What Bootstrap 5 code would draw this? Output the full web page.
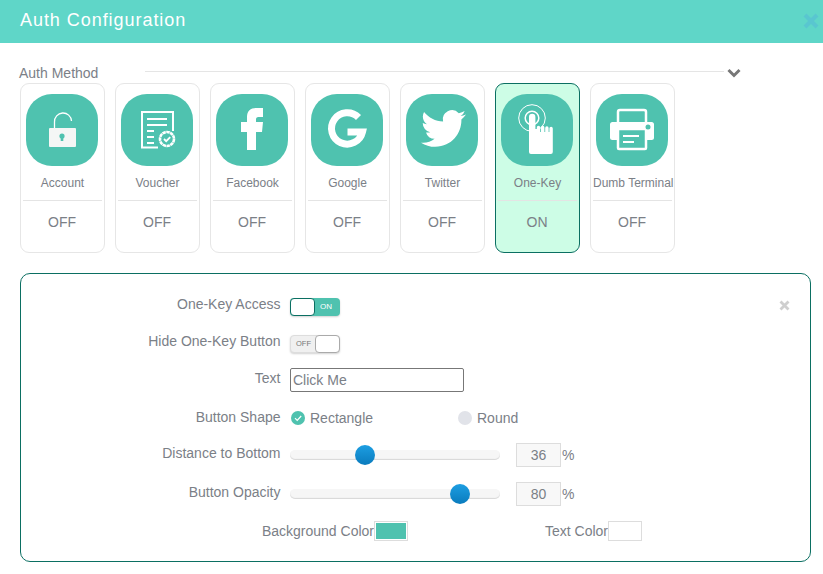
<!DOCTYPE html>
<html lang="en">
<head>
<meta charset="utf-8">
<title>Auth Configuration</title>
<link href="https://cdn.jsdelivr.net/npm/bootstrap@5.3.0/dist/css/bootstrap.min.css" rel="stylesheet">
<style>
body{font-family:"Liberation Sans",Arial,sans-serif;color:#7b8087;background:#fff;font-size:14px;overflow:hidden}
.hd-bar{height:43px;background:#5fd6c8;padding:0 4px 2px 20px}
.hd-title{font-size:18px;letter-spacing:.95px;color:#fff;font-weight:400}
.method-head{height:40px;padding:20px 82px 0 19px}
.method-line{height:1px;background:#e5e5e5;margin-left:47px;margin-right:3px;margin-top:-3px}
.tile-row{padding-left:20px;gap:10px}
.tile{width:85px;height:170px;border:1px solid #e6e6e6;border-radius:9px;background:#fff;padding:10px 1px 0}
.tile-on{background:#cdfde6;border-color:#0b6f62}
.tile-ic{width:72px;height:72px;border-radius:26px;background:#4fc2af;margin-left:4px;display:block}
.tile-name{font-size:12px;height:35px;line-height:34px;white-space:nowrap;border-bottom:1px solid #e4e4e4;margin:0 1px;text-align:center}
.tile-state{font-size:14px;line-height:43px;text-align:center;padding-right:1px}
.cfg{margin:20px 12px 0 20px;height:289px;border:1px solid #0b6f62;border-radius:10px;padding:12px 20px 0 0}
.cfg-row{height:38px}
.cfg-row:nth-child(3){height:36px}
.cfg-row:nth-child(4){height:40px}
.cfg-row:nth-child(5){height:34px}
.cfg-row:nth-child(6){height:44px}
.cfg-row:nth-child(7){height:30px}
.cfg-lbl{width:259.500px;text-align:right;margin-right:9.500px;margin-top:-3px;flex:none}
.cfg-row:nth-child(1) .cfg-lbl,.cfg-row:nth-child(4) .cfg-lbl{margin-top:-1px}
.tog{width:50px;height:18px;border-radius:4px;font-size:8px;line-height:18px;box-shadow:0 1px 2px rgba(0,0,0,.18)}
.tog-on{background:#4fc2af;color:#fff;padding-left:30px;margin-top:4px}
.tog-off{background:#f0f0f0;color:#777;padding-left:5px;border:1px solid #ddd;line-height:16px;margin-top:2px;font-size:7.500px}
.tog-knob{position:absolute;top:0;width:25px;height:18px;background:#fff;border:1px solid #0b6f62;border-radius:4px}
.tog-off .tog-knob{top:-1px;right:-1px;border-color:#aaa}
.tog-on .tog-knob{left:0}
.txt-in{width:174px;height:24px;border:1px solid #777;border-radius:2px;padding:0 2px;font-size:14px;color:#7b8087;font-family:inherit;background:#fff}
.rad{width:14px;height:14px;border-radius:50%;flex:none;margin-left:1px;margin-right:5px}
.rad-on{background:#4fc2af}
.rad-off{background:#e1e3e9}
.rad-wrap{width:167px}
.track{width:210px;height:10px;border-radius:5px;background:#f6f6f6;box-shadow:inset 0 -1px 1px #d8d8d8}
.thumb{position:absolute;top:-5px;width:20px;height:20px;border-radius:50%;background:linear-gradient(#1d9ee2,#0a7bbd);transform:translateX(-10px)}
.num{width:45px;height:24px;line-height:22px;margin-left:16px;margin-right:1px;text-align:center;border:1px solid #ddd;background:#f8f8f8;font-size:14px}
.pct{font-size:14px}
.swatch{width:34px;height:20px;border:1px solid #ddd;padding:1px;background:#fff;flex:none}
.swatch i{display:block;height:100%;background:#4fc2af}
.swatch.white i{background:#fff}
.lbl-bg{width:353px;text-align:right;flex:none}
.lbl-tx{width:200px;text-align:right;flex:none}
</style>
</head>
<body>
<div class="hd-bar d-flex align-items-center justify-content-between">
  <div class="hd-title">Auth Configuration</div>
  <svg width="16" height="16" viewBox="0 0 16 16"><path d="M2 2l12 12M14 2L2 14" stroke="#59c6d0" stroke-width="4"/></svg>
</div>

<div class="method-head d-flex align-items-center">
  <span class="text-nowrap">Auth Method</span>
  <div class="method-line flex-grow-1"></div>
  <svg width="14" height="10" viewBox="0 0 14 10" class="flex-shrink-0"><path d="M1.500 2L7 7.500 12.500 2" fill="none" stroke="#777" stroke-width="3"/></svg>
</div>

<div class="tile-row d-flex">
  <div class="tile">
    <svg class="tile-ic" viewBox="0 0 72 72"><path d="M28.500 34V28a8.500 8.500 0 0 1 17-1" fill="none" stroke="#fff" stroke-width="1.300"/><rect x="23" y="34" width="27" height="19" rx="1" fill="#f4f6f5"/><circle cx="36" cy="42" r="2.600" fill="#4fc2af"/><rect x="34.700" y="42" width="2.600" height="5" fill="#4fc2af"/></svg>
    <div class="tile-name">Account</div><div class="tile-state">OFF</div>
  </div>
  <div class="tile">
    <svg class="tile-ic" viewBox="0 0 72 72"><path d="M37 53.500H21V18h31v19" fill="none" stroke="#fff" stroke-width="2"/><path d="M26 25h20M26 31h20M26 37h7M26 43h7M26 49h7" stroke="#fff" stroke-width="2.200"/><circle cx="46" cy="45" r="7" fill="none" stroke="#fff" stroke-width="2.600" stroke-dasharray="3.500 .5"/><path d="M43 45l2.200 2.200 4-4" fill="none" stroke="#fff" stroke-width="1.800"/></svg>
    <div class="tile-name">Voucher</div><div class="tile-state">OFF</div>
  </div>
  <div class="tile">
    <svg class="tile-ic" viewBox="0 0 72 72"><path d="M31 56V38h-6V28h6v-5c0-6 3.500-9 9-9h7v9h-4.500c-2 0-2.500 1-2.500 2.500V28h7l-1 10h-6v18z" fill="#fff"/></svg>
    <div class="tile-name">Facebook</div><div class="tile-state">OFF</div>
  </div>
  <div class="tile">
    <svg class="tile-ic" viewBox="0 0 72 72"><path d="M47.500 23.500A15.700 15.700 0 1 0 51.500 38H36.500" fill="none" stroke="#fff" stroke-width="7"/></svg>
    <div class="tile-name">Google</div><div class="tile-state">OFF</div>
  </div>
  <div class="tile">
    <svg class="tile-ic" viewBox="0 0 72 72"><path transform="translate(15 12) scale(1.875)" fill="#fff" d="M23.953 4.570a10 10 0 0 1-2.825.775 4.958 4.958 0 0 0 2.163-2.723c-.951.555-2.005.959-3.127 1.184a4.920 4.920 0 0 0-8.384 4.482C7.690 8.095 4.067 6.130 1.640 3.162a4.822 4.822 0 0 0-.666 2.475c0 1.710.870 3.213 2.188 4.096a4.904 4.904 0 0 1-2.228-.616v.060a4.923 4.923 0 0 0 3.946 4.827 4.996 4.996 0 0 1-2.212.085 4.936 4.936 0 0 0 4.604 3.417 9.867 9.867 0 0 1-6.102 2.105c-.390 0-.779-.023-1.170-.067a13.995 13.995 0 0 0 7.557 2.209c9.053 0 13.998-7.496 13.985-13.985 0-.210 0-.420-.015-.630A9.935 9.935 0 0 0 24 4.590z"/></svg>
    <div class="tile-name">Twitter</div><div class="tile-state">OFF</div>
  </div>
  <div class="tile tile-on">
    <svg class="tile-ic" viewBox="0 0 72 72"><circle cx="31" cy="24" r="13.300" fill="none" stroke="#fff" stroke-width="1"/><circle cx="31" cy="24" r="6.800" fill="none" stroke="#fff" stroke-width="1.500"/><path d="M28 23a3.200 3.200 0 0 1 6.400 0v12h1.400v-1.500a1.700 1.700 0 0 1 3.400 0V38h.8v-4.500a1.700 1.700 0 0 1 3.400 0V38h.8v-4a1.700 1.700 0 0 1 3.400 0V38h.8v-3.500a1.700 1.700 0 0 1 3.400 0V58a2 2 0 0 1-2 2H30a2 2 0 0 1-2-2z" fill="#fff"/></svg>
    <div class="tile-name">One-Key</div><div class="tile-state">ON</div>
  </div>
  <div class="tile">
    <svg class="tile-ic" viewBox="0 0 72 72"><rect x="22" y="16" width="28" height="16" rx="2" fill="none" stroke="#fff" stroke-width="2.500"/><rect x="14" y="28" width="44" height="18" rx="2.500" fill="#fff"/><rect x="22" y="35" width="28" height="20" rx="1" fill="#4fc2af" stroke="#fff" stroke-width="2.500"/><path d="M27 42h16M27 48h11" stroke="#fff" stroke-width="2"/><circle cx="52" cy="33" r="2.500" fill="#4fc2af"/></svg>
    <div class="tile-name">Dumb Terminal</div><div class="tile-state">OFF</div>
  </div>
</div>

<div class="cfg">
  <div class="cfg-row d-flex align-items-center">
    <div class="cfg-lbl">One-Key Access</div>
    <div class="tog tog-on position-relative">ON<span class="tog-knob"></span></div>
    <svg class="ms-auto" width="11" height="11" viewBox="0 0 11 11"><path d="M1.500 1.500l8 8M9.500 1.500l-8 8" stroke="#cfcfcf" stroke-width="2.800"/></svg>
  </div>
  <div class="cfg-row d-flex align-items-center">
    <div class="cfg-lbl">Hide One-Key Button</div>
    <div class="tog tog-off position-relative">OFF<span class="tog-knob"></span></div>
  </div>
  <div class="cfg-row d-flex align-items-center">
    <div class="cfg-lbl">Text</div>
    <input class="txt-in" type="text" value="Click Me">
  </div>
  <div class="cfg-row d-flex align-items-center">
    <div class="cfg-lbl">Button Shape</div>
    <div class="rad-wrap d-flex align-items-center">
      <svg class="rad rad-on" viewBox="0 0 14 14"><path d="M4 7.200l2.200 2.200L10.200 5" fill="none" stroke="#fff" stroke-width="1.200"/></svg><span>Rectangle</span>
    </div>
    <div class="d-flex align-items-center"><span class="rad rad-off"></span><span>Round</span></div>
  </div>
  <div class="cfg-row d-flex align-items-center">
    <div class="cfg-lbl">Distance to Bottom</div>
    <div class="track position-relative"><span class="thumb" style="left:75px"></span></div>
    <div class="num">36</div><span class="pct">%</span>
  </div>
  <div class="cfg-row d-flex align-items-center">
    <div class="cfg-lbl">Button Opacity</div>
    <div class="track position-relative"><span class="thumb" style="left:170px"></span></div>
    <div class="num">80</div><span class="pct">%</span>
  </div>
  <div class="cfg-row d-flex align-items-center">
    <div class="lbl-bg">Background Color</div>
    <div class="swatch"><i></i></div>
    <div class="lbl-tx">Text Color</div>
    <div class="swatch white"><i></i></div>
  </div>
</div>
</body>
</html>
